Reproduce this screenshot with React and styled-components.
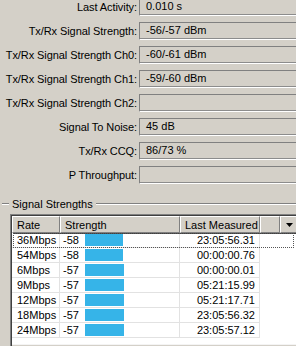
import React from 'react';
import styled, { createGlobalStyle, css } from 'styled-components';

const GlobalStyle = createGlobalStyle`
  html, body {
    margin: 0;
    padding: 0;
    background: #d4d0c8;
    overflow: hidden;
  }
  body {
    font-family: "Liberation Sans", Arial, sans-serif;
    font-size: 11px;
    color: #000;
  }
`;

const Window = styled.div`
  width: 296px;
  height: 346px;
  overflow: hidden;
  background: #d4d0c8;
`;

const Form = styled.div`
  display: grid;
  grid-template-columns: 138px 1fr;
  row-gap: 6px;
  margin-top: -2px;
`;

const Label = styled.div`
  text-align: right;
  padding-right: 1px;
  line-height: 18px;
  letter-spacing: -0.08px;
  white-space: nowrap;
`;

const Field = styled.div`
  height: 18px;
  box-sizing: border-box;
  margin-left: 1px;
  margin-right: -20px;
  border-top: 1px solid #808080;
  border-left: 1px solid #808080;
  border-bottom: 1px solid #fff;
  border-right: 1px solid #fff;
  box-shadow: inset 0 -1px 0 #8c8c8c;
  padding-left: 6px;
  line-height: 15px;
  white-space: nowrap;
`;

const Group = styled.section`
  margin-top: 13px;
`;

const Legend = styled.div`
  display: flex;
  align-items: center;
  height: 13px;
  gap: 3px;
  padding-left: 2px;

  &::before,
  &::after {
    content: '';
    height: 0;
    border-top: 1px solid #808080;
    border-bottom: 1px solid #fff;
  }
  &::before {
    width: 7px;
  }
  &::after {
    flex: 1;
  }
`;

const List = styled.div`
  margin: 4px 0 0 10px;
  width: 290px;
  height: 140px;
  box-sizing: border-box;
  border-top: 1px solid #808080;
  border-left: 1px solid #808080;
  border-bottom: 1px solid #fff;
  border-right: 1px solid #fff;
  box-shadow: inset 1px 1px 0 #404040;
  padding: 1px 0 0 1px;
  background: #fff;
  display: flex;
  flex-direction: column;
`;

const columns = '48px 120px 80px 20px 1fr';

const Header = styled.div`
  display: grid;
  grid-template-columns: ${columns};
  height: 17px;
`;

const HeadCell = styled.div`
  box-sizing: border-box;
  background: #d4d0c8;
  border-top: 1px solid #fff;
  border-left: 1px solid #fff;
  border-right: 1px solid #808080;
  border-bottom: 1px solid #808080;
  box-shadow: 1px 1px 0 #404040;
  padding-left: 4px;
  line-height: 14px;
  white-space: nowrap;
  display: flex;
  align-items: center;
  ${p => p.center && css`
    justify-content: center;
    padding-left: 0;
  `}
`;

const Rows = styled.div`
  flex: 1;
`;

const Row = styled.div`
  position: relative;
  display: grid;
  grid-template-columns: ${columns};
  height: 15px;
  ${p => p.focused && css`
    &::after {
      content: '';
      position: absolute;
      left: 1px;
      right: 5px;
      top: 0;
      bottom: 0;
      border: 1px dotted #555;
      pointer-events: none;
    }
  `}
`;

const Cell = styled.div`
  box-sizing: border-box;
  border-right: 1px solid #e2e2e2;
  border-bottom: 1px solid #e2e2e2;
  display: flex;
  align-items: center;
  gap: 5px;
  padding-left: ${p => p.pad || 4}px;
  white-space: nowrap;
  ${p => p.right && css`
    justify-content: flex-end;
    padding-left: 0;
    padding-right: 4px;
  `}
  ${p => p.blank && css`
    border: none;
  `}
`;

const Value = styled.span`
  width: 17px;
`;

const Bar = styled.div`
  height: 12px;
  background: #36b4e8;
`;

const Scroller = styled.div`
  height: 8px;
  background: #d4d0c8;
  border-top: 1px solid #f4f4f4;
`;

const fields = [
  ['Last Activity:', '0.010 s'],
  ['Tx/Rx Signal Strength:', '-56/-57 dBm'],
  ['Tx/Rx Signal Strength Ch0:', '-60/-61 dBm'],
  ['Tx/Rx Signal Strength Ch1:', '-59/-60 dBm'],
  ['Tx/Rx Signal Strength Ch2:', ''],
  ['Signal To Noise:', '45 dB'],
  ['Tx/Rx CCQ:', '86/73 %'],
  ['P Throughput:', ''],
];

const strengths = [
  ['36Mbps', -58, '23:05:56.31'],
  ['54Mbps', -58, '00:00:00.76'],
  ['6Mbps', -57, '00:00:00.01'],
  ['9Mbps', -57, '05:21:15.99'],
  ['12Mbps', -57, '05:21:17.71'],
  ['18Mbps', -57, '23:05:56.32'],
  ['24Mbps', -57, '23:05:57.12'],
];

function DropArrow() {
  return (
    <svg width="7" height="4" viewBox="0 0 7 4">
      <polygon points="0,0 7,0 3.5,4" fill="#000" />
    </svg>
  );
}

export default function App() {
  return (
    <Window>
      <GlobalStyle />
      <Form>
        {fields.map(([label, value]) => (
          <React.Fragment key={label}>
            <Label>{label}</Label>
            <Field>{value}</Field>
          </React.Fragment>
        ))}
      </Form>
      <Group>
        <Legend>Signal Strengths</Legend>
        <List>
          <Header>
            <HeadCell>Rate</HeadCell>
            <HeadCell>Strength</HeadCell>
            <HeadCell>Last Measured</HeadCell>
            <HeadCell />
            <HeadCell center><DropArrow /></HeadCell>
          </Header>
          <Rows>
            {strengths.map(([rate, dbm, time], i) => (
              <Row key={rate} focused={i === 0}>
                <Cell pad={5}>{rate}</Cell>
                <Cell pad={3}>
                  <Value>{dbm}</Value>
                  <Bar style={{ width: Math.round((100 + dbm) * 0.9) }} />
                </Cell>
                <Cell right>{time}</Cell>
                <Cell blank />
                <Cell blank />
              </Row>
            ))}
          </Rows>
          <Scroller />
        </List>
      </Group>
    </Window>
  );
}
